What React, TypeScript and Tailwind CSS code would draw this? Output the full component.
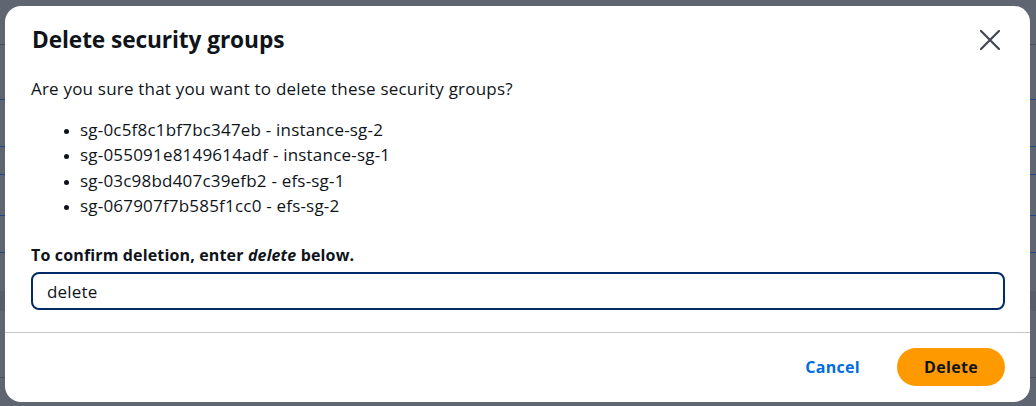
import React, { useState } from "react";

const groups = [
  { id: "sg-0c5f8c1bf7bc347eb", name: "instance-sg-2" },
  { id: "sg-055091e8149614adf", name: "instance-sg-1" },
  { id: "sg-03c98bd407c39efb2", name: "efs-sg-1" },
  { id: "sg-067907f7b585f1cc0", name: "efs-sg-2" },
];

// rows of the table that sits behind the backdrop
const bgRows = [44, 99, 146, 174, 215, 252, 291, 377];

export default function App() {
  const [value, setValue] = useState("delete");

  return (
    <div
      className="relative h-[406px] w-[1036px] overflow-hidden bg-[#5f6571] text-[#0f141a]"
      style={{ fontFamily: '"Open Sans", "Noto Sans", Arial, sans-serif' }}
    >
      {/* faint page content behind the backdrop */}
      <div className="absolute inset-0">
        {bgRows.map((y) => (
          <div
            key={y}
            className={`absolute left-0 right-0 h-px ${
              y === 44 || y === 377 ? "bg-[#4a505b]" : "bg-[#1d4a86]"
            }`}
            style={{ top: y }}
          />
        ))}
        <div className="absolute left-0 right-0 top-[291px] h-[20px] bg-[#585e69]" />
      </div>

      {/* modal */}
      <div className="absolute left-[5px] top-[6px] flex h-[396px] w-[1025px] flex-col rounded-[16px] bg-white">
        <div className="flex items-start justify-between pl-[27px] pr-[25px] pt-[19px]">
          <h2 className="mt-[2px] text-[22.7px] font-bold leading-[26px] tracking-[-0.1px]">
            Delete security groups
          </h2>
          <button className="p-[4px] text-[#424650]" aria-label="Close">
            <svg width="22" height="22" viewBox="0 0 22 22" fill="none">
              <path
                d="M2 2 L20 20 M20 2 L2 20"
                stroke="currentColor"
                strokeWidth="2.2"
                strokeLinecap="round"
              />
            </svg>
          </button>
        </div>

        <div className="flex flex-1 flex-col px-[26px] pt-[22px] text-[17px] leading-[24px] tracking-[0.2px]">
          <p>Are you sure that you want to delete these security groups?</p>
          <ul className="mt-[16px] list-disc pl-[49px] leading-[25.3px] marker:text-[13px]">
            {groups.map((g) => (
              <li key={g.id}>
                {g.id} - {g.name}
              </li>
            ))}
          </ul>
          <label className="mt-[26px] text-[16px] font-bold leading-[22px] tracking-[0.15px]">
            To confirm deletion, enter <i>delete</i> below.
          </label>
          <input
            value={value}
            onChange={(e) => setValue(e.target.value)}
            className="mt-[6px] h-[38px] w-[974px] rounded-[8px] border-2 border-[#002b66] px-[14px] text-[17px] outline-none"
          />
        </div>

        <div className="h-px bg-[#c6c6cd]" />

        <div className="flex h-[69px] items-center justify-end gap-[37px] pr-[25px] pb-[2px]">
          <button className="text-[16px] font-bold tracking-[0.3px] text-[#006ce0]">Cancel</button>
          <button className="h-[38px] w-[108px] rounded-full bg-[#ff9900] text-[16px] font-bold tracking-[0.3px] text-[#0f141a]">
            Delete
          </button>
        </div>
      </div>
    </div>
  );
}
